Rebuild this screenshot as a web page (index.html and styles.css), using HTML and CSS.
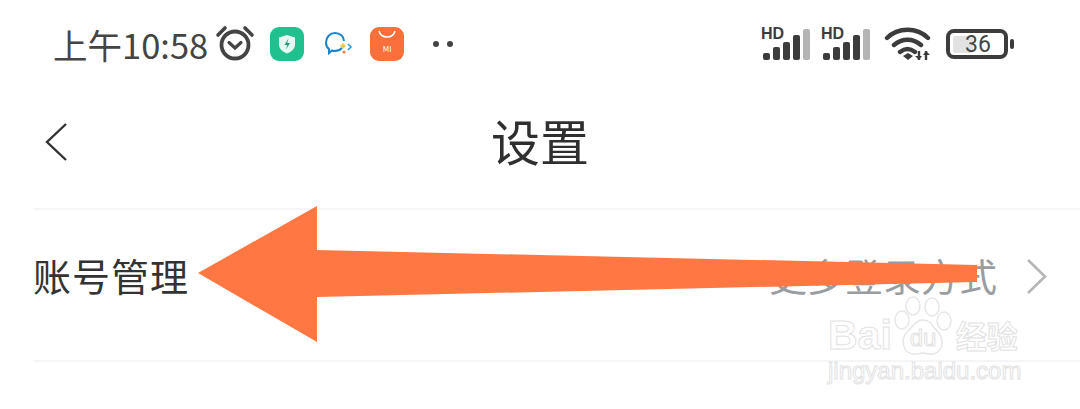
FILE: index.html
```html
<!DOCTYPE html>
<html lang="zh-CN">
<head>
    <meta charset="UTF-8">
    <title>设置</title>
    <link rel="stylesheet" href="styles.css">
</head>
<body>
    <!-- Status bar -->
    <div class="status-bar">
        <div class="status-left">
            <span class="time">上午10:58</span>
            <svg class="alarm" width="40" height="38" viewBox="0 0 40 38">
                <circle cx="20" cy="21" r="13.500" fill="none" stroke="#444" stroke-width="3.800"/>
                <path d="M14 18.500l6 5.500 6-5.500" fill="none" stroke="#444" stroke-width="3.200" stroke-linecap="round"/>
                <path d="M3 11l7-7M37 11l-7-7" fill="none" stroke="#444" stroke-width="3.600" stroke-linecap="round"/>
            </svg>
            <svg class="app-shield" width="34" height="34" viewBox="0 0 34 34">
                <rect width="34" height="34" rx="9" fill="#20c08f"/>
                <path d="M17 8l8 2.500v7c0 4.500-3.500 7-8 9-4.500-2-8-4.500-8-9v-7z" fill="#e6f8f1"/>
                <path d="M18.500 11.500l-4 6.500h2.800l-1.300 4.500 4-6.500h-2.800z" fill="#1a9c78"/>
            </svg>
            <svg class="app-chat" width="30" height="28" viewBox="0 0 30 28">
                <path d="M19 18c-2 2-4 3-7 3-1 0-2 0-3-.5L6 23v-4c-2-1.500-3-4-3-6.500C3 7 7 3 12 3s9 3.500 9 8" fill="none" stroke="#1b84c9" stroke-width="2"/>
                <path d="M20 13l3 3-3 3-3-3z" fill="#f0c84a"/>
                <path d="M25 14l3 3-3 3" fill="none" stroke="#2b9ad8" stroke-width="1.600"/>
                <circle cx="21" cy="22" r="1.600" fill="#ef7d3c"/>
            </svg>
            <div class="app-mi">
                <svg width="34" height="14" viewBox="0 0 34 14"><path d="M9 4c1 4 4 6 8 6s7-2 8-6" fill="none" stroke="#fff" stroke-width="1.500"/></svg>
                <span>MI</span>
            </div>
            <div class="dots"><i></i><i></i></div>
        </div>
        <div class="status-right">
            <div class="signal">
                <span class="hd">HD</span>
                <div class="bars"><i class="b1"></i><i class="b2"></i><i class="b3"></i><i class="b4"></i><i class="b5"></i></div>
            </div>
            <div class="signal">
                <span class="hd">HD</span>
                <div class="bars"><i class="b1"></i><i class="b2"></i><i class="b3"></i><i class="b4"></i><i class="b5"></i></div>
            </div>
            <svg class="wifi" width="48" height="36" viewBox="0 0 48 36">
                <path d="M3 12C14 1 33 1 44 12M10 19c8-7 19-7 27 0M16 26c5-4 10-4 15 0" fill="none" stroke="#3c3c3c" stroke-width="4.400" stroke-linecap="round"/>
                <path d="M19 30l5-3 5 3-5 4z" fill="#3c3c3c"/>
                <path d="M35 25v9M42 25v9" stroke="#3c3c3c" stroke-width="2.400"/>
                <path d="M31 30l4 4 3-4zM39 29l3-4 4 4z" fill="#3c3c3c"/>
            </svg>
            <div class="battery">
                <div class="battery-body"><span class="battery-fill"></span><span class="battery-num">36</span></div>
                <span class="battery-cap"></span>
            </div>
        </div>
    </div>

    <!-- Title bar -->
    <div class="nav-bar">
        <svg class="back" width="24" height="40" viewBox="0 0 24 40"><path d="M22 2L3 20l19 18" fill="none" stroke="#333" stroke-width="2.400"/></svg>
        <h1>设置</h1>
    </div>

    <!-- Settings list -->
    <div class="setting-row">
        <span class="setting-name">账号管理</span>
        <div class="setting-right">
            <span class="setting-value">更多登录方式</span>
            <svg class="setting-chevron" width="22" height="36" viewBox="0 0 22 36"><path d="M2 1l17 16.500L2 34" fill="none" stroke="#b4b6b8" stroke-width="2.600"/></svg>
        </div>
    </div>

    <!-- Annotation drawn over the screenshot -->
    <svg class="arrow" width="1080" height="409" viewBox="0 0 1080 409">
        <path d="M198 273L317 206V250L977 265V282L317 297V342Z" fill="#ff7843"/>
    </svg>

    <!-- Watermark -->
    <div class="watermark">
        <div class="wm-top">
            <span class="wm-bai">Bai</span>
            <svg class="wm-paw" width="58" height="62" viewBox="0 0 58 62">
                <g fill="#fff" stroke="#e6e6e6" stroke-width="1.500">
                    <ellipse cx="19" cy="11" rx="7" ry="9"/>
                    <ellipse cx="38" cy="12" rx="7" ry="9"/>
                    <ellipse cx="8" cy="25" rx="7" ry="9"/>
                    <ellipse cx="50" cy="26" rx="7" ry="9"/>
                    <path d="M29 25c8 0 10 7 15 12 6 6 6 20-5 22-4 1-7-1-10-1s-6 2-11 1C8 57 7 43 13 37c6-5 8-12 16-12z"/>
                </g>
                <text x="29" y="51" class="wm-du">du</text>
            </svg>
            <span class="wm-cn">经验</span>
        </div>
        <div class="wm-url">jingyan.baidu.com</div>
    </div>
</body>
</html>
```

FILE: styles.css
```css
body {
    margin: 0;
    height: 409px;
    overflow: hidden;
    background-color: #fff;
    font-family: "Noto Sans CJK SC", "Noto Sans", sans-serif;
    color: #333;
}

.status-bar {
    height: 88px;
    display: flex;
    justify-content: space-between;
    align-items: center;
    padding: 0 66px 0 53px;
}
.status-left, .status-right {
    display: flex;
    align-items: center;
}
.time {
    font-size: 34.500px;
    color: #444;
    font-family: "Noto Sans CJK SC", sans-serif;
}
.alarm { margin-left: 7px; margin-bottom: 2px; }
.app-shield { margin-left: 15px; }
.app-chat { margin-left: 19px; }
.app-mi {
    width: 34px;
    height: 34px;
    margin-left: 17px;
    border-radius: 9px;
    background-color: #fb6f3c;
    display: flex;
    flex-direction: column;
    align-items: center;
}
.app-mi span {
    font-size: 8px;
    line-height: 8px;
    margin-top: 4px;
    color: #fff;
}
.dots {
    display: flex;
    gap: 8px;
    margin-left: 29px;
}
.dots i {
    width: 6px;
    height: 6px;
    border-radius: 50%;
    background-color: #444;
}

.signal {
    width: 50px;
    height: 32px;
    margin-right: 10px;
    display: flex;
    flex-direction: column;
}
.hd {
    font-family: "Liberation Sans", sans-serif;
    font-weight: bold;
    font-size: 16px;
    line-height: 12px;
    color: #3c3c3c;
}
.bars {
    display: flex;
    align-items: flex-end;
    gap: 3.500px;
    height: 31px;
    margin-top: -11px;
    padding-left: 2px;
}
.bars i {
    width: 6.500px;
    border-radius: 2px;
    background-color: #3c3c3c;
}
.bars .b1 { height: 7px; }
.bars .b2 { height: 13px; }
.bars .b3 { height: 18px; }
.bars .b4 { height: 25px; }
.bars .b5 { height: 31px; background-color: #b4b4b4; }

.wifi { margin-left: 3px; margin-right: 14px; }
.battery {
    display: flex;
    align-items: center;
}
.battery-body {
    width: 48px;
    height: 18px;
    border: 4px solid #3c3c3c;
    border-radius: 8px;
    padding: 2px 3px;
    display: flex;
    align-items: center;
    position: relative;
}
.battery-fill {
    width: 20px;
    height: 17px;
    border-radius: 2px;
    background-color: #e2e2e2;
}
.battery-num {
    position: absolute;
    left: 15px;
    font-family: "Roboto", sans-serif;
    font-size: 23px;
    color: #444;
}
.battery-cap {
    width: 4px;
    height: 10px;
    margin-left: 2px;
    border-radius: 2px;
    background-color: #3c3c3c;
}

.nav-bar {
    height: 120px;
    position: relative;
    display: flex;
    align-items: center;
    justify-content: center;
    padding-bottom: 18px;
    box-sizing: border-box;
}
.nav-bar h1 {
    margin: 0;
    font-size: 49px;
    font-weight: 400;
    color: #2f2f2f;
    line-height: 1;
}
.back {
    position: absolute;
    left: 44px;
    top: 34px;
}

.setting-row {
    height: 128px;
    margin-left: 33px;
    border-top: 2px solid #f4f5f7;
    border-bottom: 2px solid #f4f5f7;
    display: flex;
    justify-content: space-between;
    align-items: center;
    padding-right: 32px;
    padding-bottom: 22px;
}
.setting-name {
    font-size: 38px;
    letter-spacing: 1px;
    color: #333;
}
.setting-right {
    display: flex;
    align-items: center;
    gap: 29px;
}
.setting-value {
    font-size: 38px;
    color: #999ca0;
}
.setting-chevron { margin-top: 6px; }

.arrow {
    position: absolute;
    left: 0;
    top: 0;
}

.watermark {
    position: absolute;
    left: 828px;
    top: 293px;
    width: 200px;
}
.wm-top {
    display: flex;
    align-items: flex-end;
    height: 64px;
}
.wm-bai, .wm-cn, .wm-url, .wm-du {
    font-family: "Liberation Sans", sans-serif;
    color: transparent;
    -webkit-text-stroke: 1px #e2e2e2;
}
.wm-bai {
    font-size: 41px;
    font-weight: bold;
    line-height: 44px;
}
.wm-paw { margin-left: 2px; }
.wm-du {
    font-size: 24px;
    text-anchor: middle;
    fill: #fff;
    stroke: #e2e2e2;
    stroke-width: 1px;
}
.wm-cn {
    font-family: "Noto Sans CJK SC", sans-serif;
    font-size: 31px;
    font-weight: bold;
    line-height: 44px;
    margin-left: 4px;
}
.wm-url {
    font-size: 24px;
    line-height: 28px;
    white-space: nowrap;
}
```
